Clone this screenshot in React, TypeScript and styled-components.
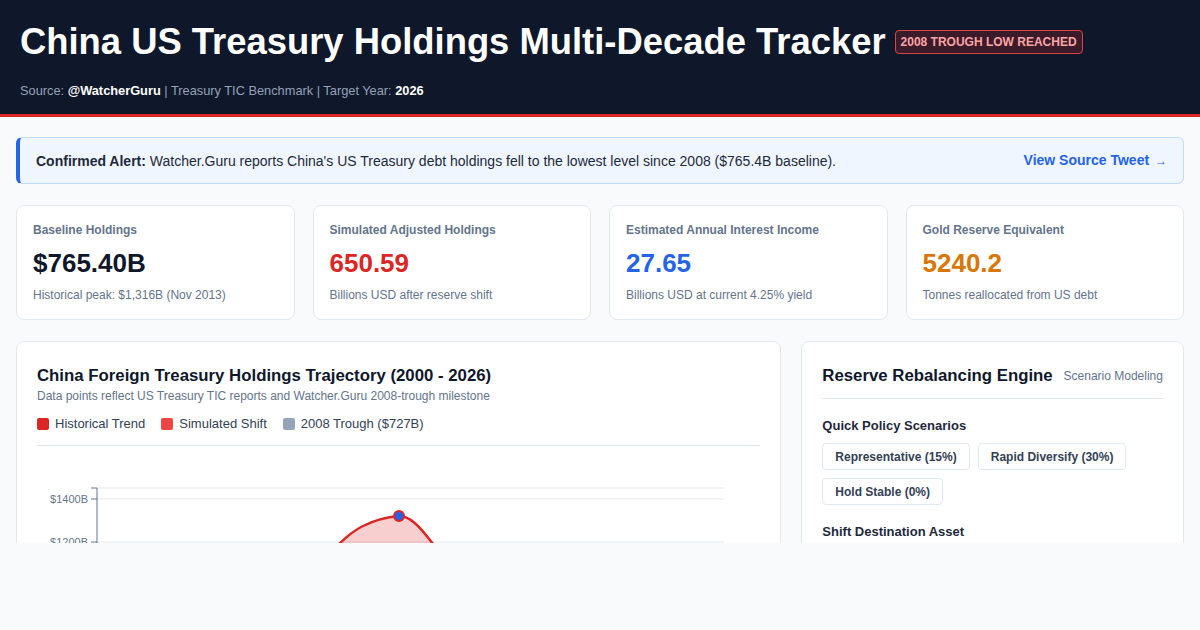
import React from 'react';
import styled, { createGlobalStyle } from 'styled-components';

type Stat = {
  label: string;
  value: string;
  note: string;
  tone: 'dark' | 'red' | 'blue' | 'amber';
};

const stats: Stat[] = [
  { label: 'Baseline Holdings', value: '$765.40B', note: 'Historical peak: $1,316B (Nov 2013)', tone: 'dark' },
  { label: 'Simulated Adjusted Holdings', value: '650.59', note: 'Billions USD after reserve shift', tone: 'red' },
  { label: 'Estimated Annual Interest Income', value: '27.65', note: 'Billions USD at current 4.25% yield', tone: 'blue' },
  { label: 'Gold Reserve Equivalent', value: '5240.2', note: 'Tonnes reallocated from US debt', tone: 'amber' },
];

const toneColors: Record<Stat['tone'], string> = {
  dark: '#0f172a',
  red: '#dc2626',
  blue: '#2563eb',
  amber: '#d97706',
};

const legend = [
  { label: 'Historical Trend', color: '#dc2626' },
  { label: 'Simulated Shift', color: '#ef4444' },
  { label: '2008 Trough ($727B)', color: '#94a3b8' },
];

const scenarios = ['Representative (15%)', 'Rapid Diversify (30%)', 'Hold Stable (0%)'];

// chart scale: 200B = 43px, $1400B sits at y=36
const yOf = (v: number) => 36 + (1400 - v) * 0.215;
const yTicks = [1400, 1200, 1000, 800, 600, 400, 200, 0];

const linePath =
  'M60,324 C120,312 200,235 266,128 C286,98 304,74 326,63 C340,56 351,54 362,53 ' +
  'C372,53 381,61 396,81 C410,100 420,112 432,110 C450,106 470,96 490,104 ' +
  'C520,112 545,114 570,130 C600,150 625,175 664,197';

export default function App(): JSX.Element {
  return (
    <>
      <GlobalStyle />
      <Frame>
        <Header>
          <TitleRow>
            <Title>China US Treasury Holdings Multi-Decade Tracker</Title>
            <Badge>2008 Trough Low Reached</Badge>
          </TitleRow>
          <Source>
            Source: <strong>@WatcherGuru</strong> | Treasury TIC Benchmark | Target Year:{' '}
            <strong>2026</strong>
          </Source>
        </Header>

        <Main>
          <Alert>
            <AlertText>
              <strong>Confirmed Alert:</strong> Watcher.Guru reports China's US Treasury debt
              holdings fell to the lowest level since 2008 ($765.4B baseline).
            </AlertText>
            <AlertLink>
              View Source Tweet <Arrow>→</Arrow>
            </AlertLink>
          </Alert>

          <StatGrid>
            {stats.map((s) => (
              <StatCard key={s.label}>
                <StatLabel>{s.label}</StatLabel>
                <StatValue tone={s.tone}>{s.value}</StatValue>
                <StatNote>{s.note}</StatNote>
              </StatCard>
            ))}
          </StatGrid>

          <Columns>
            <Panel>
              <PanelTitle>China Foreign Treasury Holdings Trajectory (2000 - 2026)</PanelTitle>
              <PanelSub>Data points reflect US Treasury TIC reports and Watcher.Guru 2008-trough milestone</PanelSub>
              <Legend>
                {legend.map((l) => (
                  <LegendItem key={l.label}>
                    <Swatch color={l.color} />
                    {l.label}
                  </LegendItem>
                ))}
              </Legend>
              <ChartBox>
                <svg width="723" height="340" viewBox="0 0 723 340">
                  <line x1="60" x2="687" y1="25" y2="25" stroke="#e5e7eb" strokeWidth="1" />
                  {yTicks.map((t) => (
                    <g key={t}>
                      <line x1="60" x2="687" y1={yOf(t)} y2={yOf(t)} stroke="#e5e7eb" strokeWidth="1" />
                      <line x1="54" x2="60" y1={yOf(t)} y2={yOf(t)} stroke="#64748b" strokeWidth="1" />
                      <text
                        x="51"
                        y={yOf(t) + 4}
                        textAnchor="end"
                        fontSize="11"
                        fill="#64748b"
                        fontFamily="Liberation Sans, Arial, sans-serif"
                      >
                        ${t}B
                      </text>
                    </g>
                  ))}
                  <line x1="54" x2="60" y1="25" y2="25" stroke="#64748b" strokeWidth="1" />
                  <line x1="60" x2="60" y1="25" y2="340" stroke="#64748b" strokeWidth="1" />
                  <path d={`${linePath} L664,340 L60,340 Z`} fill="rgba(220,38,38,0.22)" />
                  <path d={linePath} fill="none" stroke="#dc2626" strokeWidth="2.5" />
                  <circle cx="362" cy="53" r="5" fill="#2563eb" stroke="#dc2626" strokeWidth="2" />
                </svg>
              </ChartBox>
            </Panel>

            <Panel>
              <EngineHead>
                <EngineTitle>Reserve Rebalancing Engine</EngineTitle>
                <EngineTag>Scenario Modeling</EngineTag>
              </EngineHead>
              <SectionLabel>Quick Policy Scenarios</SectionLabel>
              <ScenarioRow>
                {scenarios.map((s) => (
                  <ScenarioButton key={s}>{s}</ScenarioButton>
                ))}
              </ScenarioRow>
              <SectionLabel>Shift Destination Asset</SectionLabel>
            </Panel>
          </Columns>
        </Main>
      </Frame>
    </>
  );
}

const GlobalStyle = createGlobalStyle`
  * { box-sizing: border-box; }
  body {
    margin: 0;
    background: #f8fafc;
    font-family: "Liberation Sans", Arial, Helvetica, sans-serif;
    color: #0f172a;
  }
`;

const Frame = styled.div`
  height: 543px;
  overflow: hidden;
  background: #f8fafc;
`;

const Header = styled.header`
  background: #0f172a;
  border-bottom: 3px solid #dc2626;
  padding: 20px 20px 13px;
`;

const TitleRow = styled.div`
  display: flex;
  align-items: center;
  gap: 9px;
`;

const Title = styled.h1`
  margin: 0;
  font-size: 36.4px;
  line-height: 43px;
  font-weight: 700;
  color: #ffffff;
`;

const Badge = styled.span`
  display: inline-block;
  padding: 3px 5px;
  font-size: 12px;
  line-height: 16px;
  font-weight: 700;
  text-transform: uppercase;
  color: #fca5a5;
  background: #3b1a2a;
  border: 1px solid #dc4444;
  border-radius: 4px;
`;

const Source = styled.p`
  margin: 18px 0 0;
  font-size: 12.8px;
  line-height: 20px;
  color: #94a3b8;

  strong {
    color: #ffffff;
  }
`;

const Main = styled.main`
  padding: 20px 16px;
  display: flex;
  flex-direction: column;
  gap: 21px;
`;

const Alert = styled.div`
  display: flex;
  align-items: center;
  justify-content: space-between;
  padding: 12px 16px;
  background: #eff6ff;
  border: 1px solid #bfdbfe;
  border-left: 4px solid #2563eb;
  border-radius: 6px;
`;

const AlertText = styled.p`
  margin: 0;
  font-size: 14px;
  line-height: 20px;
  color: #1e293b;
`;

const AlertLink = styled.a`
  font-size: 14px;
  line-height: 20px;
  font-weight: 700;
  color: #2563eb;
  text-decoration: none;
  white-space: nowrap;
`;

const Arrow = styled.span`
  font-size: 12px;
  font-weight: 400;
  margin-left: 2px;
`;

const StatGrid = styled.div`
  display: grid;
  grid-template-columns: repeat(4, 1fr);
  gap: 18px;
`;

const StatCard = styled.div`
  background: #ffffff;
  border: 1px solid #e2e8f0;
  border-radius: 8px;
  padding: 15px 16px;
`;

const StatLabel = styled.div`
  font-size: 12px;
  line-height: 18px;
  font-weight: 700;
  color: #64748b;
`;

const StatValue = styled.div<{ tone: Stat['tone'] }>`
  margin-top: 8px;
  font-size: 26px;
  line-height: 32px;
  font-weight: 700;
  color: ${({ tone }) => toneColors[tone]};
`;

const StatNote = styled.div`
  margin-top: 7px;
  font-size: 12px;
  line-height: 18px;
  color: #64748b;
`;

const Columns = styled.div`
  display: grid;
  grid-template-columns: 2fr 1fr;
  gap: 20px;
  align-items: start;
`;

const Panel = styled.section`
  background: #ffffff;
  border: 1px solid #e2e8f0;
  border-radius: 8px;
  padding: 22px 20px 20px;
  min-height: 480px;
`;

const PanelTitle = styled.h2`
  margin: 0;
  font-size: 16.8px;
  line-height: 24px;
  font-weight: 700;
  color: #0f172a;
`;

const PanelSub = styled.p`
  margin: 0;
  font-size: 12px;
  line-height: 16px;
  color: #64748b;
`;

const Legend = styled.div`
  display: flex;
  gap: 16px;
  margin-top: 11px;
  padding-bottom: 12px;
  border-bottom: 1px solid #e2e8f0;
`;

const LegendItem = styled.span`
  display: flex;
  align-items: center;
  gap: 6px;
  font-size: 13px;
  line-height: 18px;
  color: #334155;
`;

const Swatch = styled.span<{ color: string }>`
  width: 12px;
  height: 12px;
  border-radius: 2px;
  background: ${({ color }) => color};
`;

const ChartBox = styled.div`
  margin-top: 17px;

  svg {
    display: block;
  }
`;

const EngineHead = styled.div`
  display: flex;
  align-items: center;
  justify-content: space-between;
  padding-bottom: 10px;
  border-bottom: 1px solid #e2e8f0;
`;

const EngineTitle = styled.h2`
  margin: 0;
  font-size: 16.8px;
  line-height: 24px;
  font-weight: 700;
  color: #0f172a;
`;

const EngineTag = styled.span`
  font-size: 12px;
  color: #64748b;
`;

const SectionLabel = styled.h3`
  margin: 18px 0 0;
  font-size: 13px;
  line-height: 18px;
  font-weight: 700;
  color: #1e293b;
`;

const ScenarioRow = styled.div`
  display: flex;
  flex-wrap: wrap;
  gap: 8px;
  margin-top: 8px;
`;

const ScenarioButton = styled.button`
  height: 27px;
  padding: 0 12px;
  font-family: inherit;
  font-size: 12px;
  font-weight: 700;
  color: #334155;
  background: #ffffff;
  border: 1px solid #e2e8f0;
  border-radius: 4px;
`;
